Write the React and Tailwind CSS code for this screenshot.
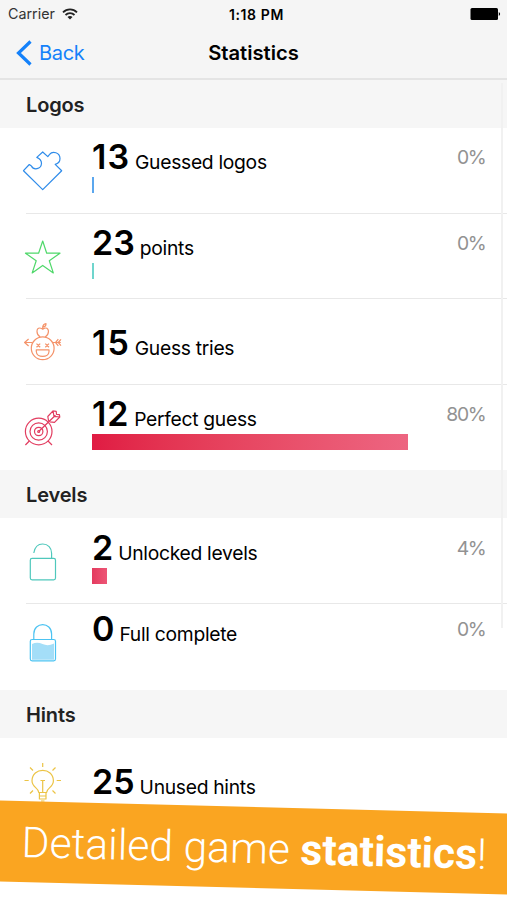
import React from 'react';

const PuzzleIcon = () => (
  <g stroke="#2f8cea">
    <path d="M23.5 170.7 L29.3 164.5 L31.4 166 C33.5 170.4 41 169.6 41.5 163.5 C41.5 160.5 39.8 158.6 36.8 157.4 L42.7 152 L47.8 156.6 L49.6 154.4 C52.5 150.6 60 152.5 60 158.6 C60 161.4 58.4 163.6 55.2 164.4 L61.7 170.7 L42.7 189.6 Z" />
  </g>
);

const StarIcon = () => (
  <path stroke="#4fd86a" d="M42.7 240.5 L46.7 252.7 L60 252.7 L49.3 260.2 L53.3 272.4 L42.7 264.9 L32.2 272.4 L36.2 260.2 L25.5 252.7 L38.6 252.7 Z" />
);

const FaceIcon = () => (
  <g stroke="#f4936a">
    <circle cx="42.7" cy="348.3" r="11.4" />
    <path d="M36.3 349.8 H49 V351.5 C49 358 36.3 358 36.3 351.5 Z" />
    <path d="M36.5 343.6 L40.2 347.2 M40.2 343.6 L36.5 347.2 M45.3 343.6 L49 347.2 M49 343.6 L45.3 347.2" />
    <path d="M40.2 337 C35.8 334.3 36.2 328 39.8 328 C41.2 328 42 328.8 42.7 329 C43.5 328.8 44.3 328 45.7 328 C49.3 328 49.6 334.3 45.2 337" />
    <path d="M42.7 329.5 V327 C43 324.5 44.5 323.7 46 323.5 C46.2 325.5 45 327 42.7 327" />
    <path d="M32.5 342.5 H24.6 M28.6 339 L24.6 342.5 L28.6 346 M53 342.5 H60.8 M55.6 342.5 L58.3 339.2 M55.6 342.5 L58.3 345.8 M58.3 342.5 L61 339.4 M58.3 342.5 L61 345.6" />
  </g>
);

const TargetIcon = () => (
  <g stroke="#e23d60">
    <circle cx="38.7" cy="431" r="13.3" />
    <circle cx="38.7" cy="431" r="8.7" />
    <circle cx="38.7" cy="431" r="4.2" />
    <circle cx="38.7" cy="431" r="1" />
    <path d="M38.7 431 L55.5 414.7 M48.6 420.5 L47.8 416 L53 410.3 L54 415.8 L59.8 416.5 L54.5 421.8 L49.8 421.3 M53 410.3 L56.2 410.8 L56.5 413.8 L59.4 414.2 L59.8 416.5 M29.3 440.5 L25.4 444.5 M48 440.5 L52 444.5" />
  </g>
);

const OpenLockIcon = () => (
  <g stroke="#4fc8bc">
    <rect x="30.3" y="558.4" width="25.2" height="21.4" rx="1.8" />
    <path d="M33.8 553 C34.8 546.8 38 544 42.7 544 C48 544 51.6 548 51.6 553.2 V558.4" />
  </g>
);

const LockIcon = () => (
  <g stroke="#4cc3f2">
    <path stroke="none" fill="#a4def8" d="M32 643.5 Q37 641 42.5 643.5 T54 643 V659.3 H32 Z" />
    <rect x="30.3" y="639" width="25.2" height="21.3" rx="1.8" />
    <path d="M33.8 639 V633.5 C33.8 621 51.6 621 51.6 633.5 V639" />
  </g>
);

const BulbIcon = () => (
  <g stroke="#ecc445">
    <path d="M38.8 792.5 C38.8 788 32 787.5 32 780.8 C32 766.8 53.4 766.8 53.4 780.8 C53.4 787.5 46.6 788 46.6 792.5 Z" />
    <path d="M42.7 792.5 V780.5 M40.5 780.5 H45 M38.8 796 H46.6 M39.4 792.5 V799 H46 V792.5 M41 801 H44.5" />
    <path d="M42.7 763 V767 M24.5 780.5 H28.7 M56.7 780.5 H61 M30 767.5 L33 770.5 M55.5 767.5 L52.5 770.5 M30 793.5 L33 790.5 M55.5 793.5 L52.5 790.5" />
  </g>
);

function SectionHeader({ children }) {
  return (
    <h2 className="flex h-12 items-center bg-[#f6f6f6] pl-[26px] pt-[1px] text-[20px] font-semibold tracking-[-0.15px] text-[#222]">
      {children}
    </h2>
  );
}

function Row({ icon, box, pad, value, label, percent, bar, last, height = 'h-[85.5px]', tracking = 'tracking-normal' }) {
  return (
    <div className={`relative flex ${height}`}>
      <svg className="h-[85px] w-[92px] shrink-0" viewBox={box} fill="none" strokeWidth="1.2" strokeLinejoin="round">
        {icon}
      </svg>
      <div className={`min-w-0 flex-1 ${pad}`}>
        <p className="flex h-[34px] items-baseline gap-[5px] whitespace-nowrap leading-[34px] text-black">
          <span className={`text-[34px] font-semibold ${tracking}`}>{value}</span>
          <span className="text-[19.3px] tracking-[-0.3px]">{label}</span>
        </p>
        {bar && <div className={`mt-[3px] h-4 ${bar}`} />}
      </div>
      <span className={`pr-[21.5px] text-[19.3px] leading-[34px] tracking-[-1.3px] text-[#929292] ${pad}`}>{percent}</span>
      {!last && <div className="absolute bottom-0 left-[26px] right-0 h-px bg-[#e8e8e8]" />}
    </div>
  );
}

export default function App() {
  return (
    <main className="relative h-[900px] w-[507px] overflow-hidden bg-white font-['Inter',sans-serif]">
      <header className="h-20 border-b-2 border-[#e4e4e4] bg-[#f5f5f5]">
        <div className="grid h-7 grid-cols-3 items-center pl-2 pr-[6px] text-[14.3px] text-[#333]">
          <div className="flex items-center gap-[7px]">
            <span>Carrier</span>
            <svg className="h-3 w-4" viewBox="0 0 16 12" fill="none" stroke="#222" strokeWidth="1.8">
              <path d="M1 4.3 C5 0.3 11 0.3 15 4.3 M3.5 7 C6 4.5 10 4.5 12.5 7" />
              <path d="M8 11.5 L5.5 9 C7 7.7 9 7.7 10.5 9 Z" fill="#222" stroke="none" />
            </svg>
          </div>
          <span className="whitespace-nowrap pl-[4px] text-center text-[14px] font-semibold tracking-[0.6px] text-black">1:18 PM</span>
          <svg className="h-3 w-[31px] justify-self-end" viewBox="0 0 31 12">
            <rect x="0.5" y="0" width="27.5" height="12" rx="1.5" />
            <path d="M28.8 4 Q31.5 6 28.8 8 Z" />
          </svg>
        </div>
        <div className="grid h-[50px] grid-cols-3 items-center px-4">
          <div className="flex items-center gap-[7px] text-[20px] tracking-[-0.3px] text-[#1481fa]">
            <svg className="h-[26px] w-[16px]" viewBox="0 0 16 26" fill="none" stroke="#1481fa" strokeWidth="3.2">
              <path d="M14.5 1.5 L2.5 13 L14.5 24.5" />
            </svg>
            <span>Back</span>
          </div>
          <h1 className="text-center text-[20.2px] font-semibold text-black">Statistics</h1>
        </div>
      </header>

      <SectionHeader>Logos</SectionHeader>
      <Row icon={<PuzzleIcon />} box="0 128 92 85" pad="pt-[12px]" value="13" tracking="tracking-[1px]" label="Guessed logos" percent="0%" bar="w-[2px] bg-[#5ba7ee]" />
      <Row icon={<StarIcon />} box="0 213.5 92 85" pad="pt-[12px]" value="23" label="points" percent="0%" bar="w-[2px] bg-[#6fd5cd]" />
      <Row icon={<FaceIcon />} box="0 299 92 85" pad="pt-[27px]" value="15" tracking="tracking-[1px]" label="Guess tries" percent="" />
      <Row icon={<TargetIcon />} box="0 384.5 92 85" pad="pt-[12px]" value="12" tracking="tracking-[0.8px]" label="Perfect guess" percent="80%" bar="w-[315.5px] bg-linear-to-r from-[#e01b43] to-[#ed6581]" last />

      <SectionHeader>Levels</SectionHeader>
      <Row icon={<OpenLockIcon />} box="0 518 92 85" pad="pt-[13px]" value="2" label="Unlocked levels" percent="4%" bar="w-[15px] bg-linear-to-r from-[#e43a5f] to-[#ed5576]" />
      <Row icon={<LockIcon />} box="0 603.5 92 85" pad="pt-[8px]" value="0" label="Full complete" percent="0%" last height="h-[86.5px]" />

      <SectionHeader>Hints</SectionHeader>
      <Row icon={<BulbIcon />} box="0 738 92 85" pad="pt-[27px]" value="25" label="Unused hints" percent="" last />

      <div className="absolute left-[501px] top-[83px] h-[545px] w-[2px] bg-[#f1f1f1]" />

      <div className="absolute -left-5 top-[807px] flex h-[81px] w-[547px] rotate-[1.47deg] items-center whitespace-nowrap bg-[#faa521] pl-[41.5px] pt-[2px] font-['Roboto',sans-serif] text-[42.7px] font-light text-white">
        <p>
          Detailed game <b className="font-bold">statistics</b>!
        </p>
      </div>
    </main>
  );
}
